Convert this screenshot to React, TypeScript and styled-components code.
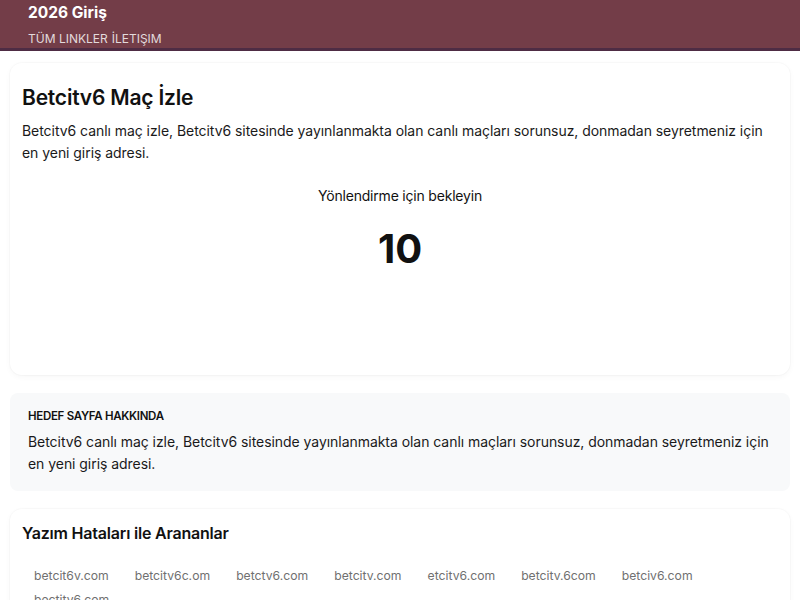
import React from "react";
import styled, { createGlobalStyle } from "styled-components";

const Global = createGlobalStyle`
  * { box-sizing: border-box; }
  body {
    margin: 0;
    background: #ffffff;
    font-family: Inter, "Noto Sans", sans-serif;
    color: #111;
  }
`;

const Header = styled.header`
  background: #733d48;
  border-bottom: 3px solid #4e2c44;
  padding: 2px 28px 1px;
  height: 51px;
`;

const Brand = styled.div`
  color: #fff;
  font-size: 15.5px;
  font-weight: 700;
  line-height: 22px;
`;

const Nav = styled.nav`
  display: flex;
  gap: 4px;
  margin-top: 6px;
  color: rgba(255, 255, 255, 0.82);
  font-size: 12px;
  line-height: 18px;
`;

const Main = styled.main`
  padding: 12px 10px 0;
  display: flex;
  flex-direction: column;
  gap: 18px;
`;

const Card = styled.section`
  background: #fff;
  border-radius: 12px;
  box-shadow: 0 0 0 1px rgba(0, 0, 0, 0.02), 0 2px 6px rgba(0, 0, 0, 0.035);
  padding: 12px 12px 0;
`;

const Title = styled.h1`
  margin: 9px 0 8px;
  font-size: 21px;
  font-weight: 600;
  line-height: 28px;
  letter-spacing: -0.2px;
`;

const Text = styled.p`
  margin: 0;
  font-size: 14px;
  line-height: 22px;
  letter-spacing: -0.05px;
  color: #1a1a1a;
`;

const Redirect = styled.div`
  display: flex;
  flex-direction: column;
  align-items: center;
  padding: 21px 0 0;
  height: 211px;
`;

const Wait = styled.div`
  font-size: 14px;
  line-height: 22px;
  letter-spacing: -0.2px;
`;

const Counter = styled.div`
  margin-top: 18px;
  font-size: 40px;
  font-weight: 700;
  line-height: 48px;
`;

const InfoBox = styled.section`
  background: #f8f9fa;
  border-radius: 8px;
  padding: 14px 18px 16px;
`;

const InfoLabel = styled.h2`
  margin: 0 0 6px;
  font-size: 11.5px;
  font-weight: 600;
  line-height: 18px;
  letter-spacing: -0.3px;
`;

const SubTitle = styled.h2`
  margin: 0 0 19px;
  font-size: 16px;
  font-weight: 600;
  line-height: 24px;
  letter-spacing: -0.2px;
`;

const Typos = styled.ul`
  list-style: none;
  margin: 0;
  padding: 0;
  display: flex;
  flex-wrap: wrap;
  column-gap: 2px;
  row-gap: 0;
`;

const Typo = styled.li`
  padding: 2px 12px;
  font-size: 12.2px;
  line-height: 20px;
  color: #707070;
`;

const typos = [
  "betcit6v.com",
  "betcitv6c.om",
  "betctv6.com",
  "betcitv.com",
  "etcitv6.com",
  "betcitv.6com",
  "betciv6.com",
  "bectitv6.com",
];

const desc =
  "Betcitv6 canlı maç izle, Betcitv6 sitesinde yayınlanmakta olan canlı maçları sorunsuz, donmadan seyretmeniz için en yeni giriş adresi.";

export default function App() {
  return (
    <>
      <Global />
      <Header>
        <Brand>2026 Giriş</Brand>
        <Nav>
          <span>TÜM LINKLER</span>
          <span>İLETIŞIM</span>
        </Nav>
      </Header>
      <Main>
        <Card>
          <Title>Betcitv6 Maç İzle</Title>
          <Text>{desc}</Text>
          <Redirect>
            <Wait>Yönlendirme için bekleyin</Wait>
            <Counter>10</Counter>
          </Redirect>
        </Card>
        <InfoBox>
          <InfoLabel>HEDEF SAYFA HAKKINDA</InfoLabel>
          <Text>{desc}</Text>
        </InfoBox>
        <Card>
          <SubTitle>Yazım Hataları ile Arananlar</SubTitle>
          <Typos>
            {typos.map((t) => (
              <Typo key={t}>{t}</Typo>
            ))}
          </Typos>
        </Card>
      </Main>
    </>
  );
}
